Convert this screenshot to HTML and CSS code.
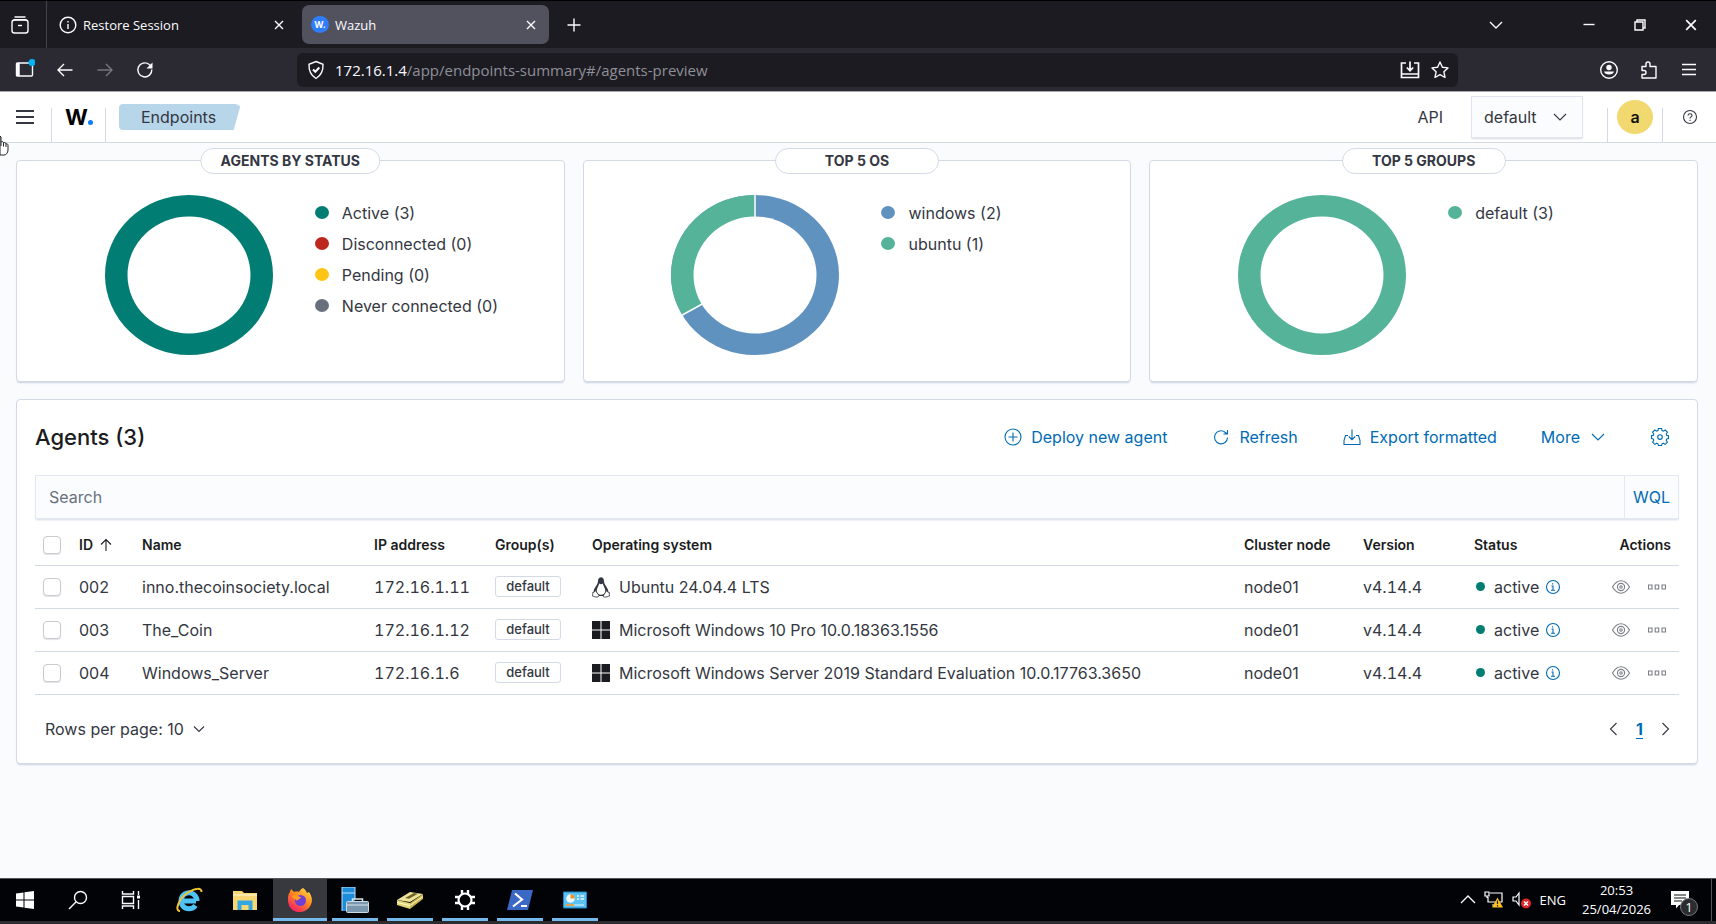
FILE: index.html
```
<!DOCTYPE html>
<html lang="en">
<head>
<meta charset="utf-8">
<title>Wazuh</title>
<link rel="stylesheet" href="styles.css">
</head>
<body>
<svg class="sprite" aria-hidden="true">
  <symbol id="i-x" viewBox="0 0 10 10"><path d="M1 1l8 8M9 1l-8 8"/></symbol>
  <symbol id="i-down" viewBox="0 0 16 16"><path d="M2 5l6 6 6-6"/></symbol>
  <symbol id="i-info" viewBox="0 0 16 16"><circle cx="8" cy="8" r="6.500"/><path d="M6.500 7H8v4M6 11.300h4M7.600 4.200v1.300"/></symbol>
  <symbol id="i-eye" viewBox="0 0 20 16"><path d="M1.500 8C6.500-.3 13.500-.3 18.500 8 13.500 16.300 6.500 16.300 1.500 8z"/><circle cx="10" cy="8" r="3.600"/><circle cx="10" cy="8" r="1.200"/></symbol>
  <symbol id="i-boxes" viewBox="0 0 18 6"><path d="M.5 1h3.500v4H.5zM7.200 1h3.500v4H7.200zM14 1h3.500v4H14z"/></symbol>
  <symbol id="i-win" viewBox="0 0 18 18"><path d="M0 0h8.500v8.500H0zM9.500 0H18v8.500H9.500zM0 9.500h8.500V18H0zM9.500 9.500H18V18H9.500z"/></symbol>
</svg>

<header class="browser">
  <div class="tabs">
    <button class="view-btn" aria-label="Firefox View"><svg class="line" width="20" height="20" viewBox="0 0 20 20"><path d="M4.500 2h11M3.500 4.800h13"/><rect x="2" y="5" width="16" height="13" rx="2.500"/><path d="M8 10.500h4"/></svg></button>
    <div class="tab">
      <svg class="line" width="18" height="18" viewBox="0 0 18 18"><circle cx="9" cy="9" r="7.800"/><path d="M9 8v5M9 5v1.500"/></svg>
      <span class="tab-title">Restore Session</span>
      <button aria-label="Close Restore Session"><svg class="line" width="10" height="10"><use href="#i-x"/></svg></button>
    </div>
    <div class="tab tab-active">
      <span class="favicon">W.</span>
      <span class="tab-title">Wazuh</span>
      <button aria-label="Close Wazuh"><svg class="line" width="10" height="10"><use href="#i-x"/></svg></button>
    </div>
    <button class="new-tab" aria-label="New tab"><svg class="line" width="14" height="14" viewBox="0 0 14 14"><path d="M7 .5v13M.5 7h13"/></svg></button>
    <div class="window-btns">
      <button class="list-tabs" aria-label="List all tabs"><svg class="line" width="16" height="16"><use href="#i-down"/></svg></button>
      <button aria-label="Minimize"><svg class="line" width="12" height="12" viewBox="0 0 12 12"><path d="M.5 5.500h11"/></svg></button>
      <button aria-label="Restore"><svg class="line" width="12" height="12" viewBox="0 0 12 12"><path d="M3 3V1h8v8H9M1 3h8v8H1z"/></svg></button>
      <button aria-label="Close window"><svg class="line" width="12" height="12"><use href="#i-x"/></svg></button>
    </div>
  </div>
  <div class="navbar">
    <div class="nav-btns">
      <button aria-label="Sidebar"><svg class="line" width="20" height="22" viewBox="0 0 20 22"><rect x="1.500" y="4" width="16" height="13" rx="1"/><path d="M3 4v13" stroke-width="3.500"/><circle cx="17" cy="3.500" r="3.500" fill="#00b3f4" stroke="none"/></svg></button>
      <button aria-label="Back"><svg class="line" width="16" height="16" viewBox="0 0 16 16"><path d="M15.500 8H1M7 2L1 8l6 6"/></svg></button>
      <button aria-label="Forward"><svg class="line dim" width="16" height="16" viewBox="0 0 16 16"><path d="M.5 8H15M9 2l6 6-6 6"/></svg></button>
      <button aria-label="Reload"><svg class="line" width="18" height="18" viewBox="0 0 18 18"><path d="M15.800 8.500A7 7 0 1 1 13 3.300l2.500 2.200"/><path d="M16.500 1.500v6h-6z" fill="#fbfbfe" stroke="none"/></svg></button>
    </div>
    <div class="urlbar">
      <svg class="line" width="18" height="20" viewBox="0 0 18 20"><path d="M9 1.500l7 2.800c.3 6-1.500 11-7 14.200C3.500 15.300 1.700 10.300 2 4.300z"/><path d="M6 9.500l2.300 2.300L12.300 7.500" stroke-width="2"/></svg>
      <p class="url"><span>172.16.1.4</span>/app/endpoints-summary#/agents-preview</p>
      <button aria-label="Install"><svg class="line" width="20" height="20" viewBox="0 0 20 20"><path d="M6 3H1.500v14.500h17V3H14M1.500 14h17M10 1.500V10M6.800 7.500L10 10.700l3.200-3.200" stroke-width="1.700"/></svg></button>
      <button aria-label="Bookmark"><svg class="line" width="20" height="20" viewBox="0 0 20 20"><path d="M10 2l2.400 5.200 5.600.7-4.100 3.900 1.100 5.700-5-2.800-5 2.800 1.100-5.700L2 7.900l5.600-.7z" stroke-linejoin="round"/></svg></button>
    </div>
    <div class="nav-btns nav-right">
      <button aria-label="Account"><svg class="line" width="20" height="20" viewBox="0 0 20 20"><circle cx="10" cy="10" r="8.300"/><circle cx="10" cy="7.500" r="2.700" fill="#fbfbfe" stroke="none"/><path d="M5 11.500h10c-.5 4-9.500 4-10 0z" fill="#fbfbfe" stroke="none"/></svg></button>
      <button aria-label="Extensions"><svg class="line" width="20" height="20" viewBox="0 0 20 20"><path d="M3 6.500h4V4a2 2 0 0 1 4 0v2.500h6V18H3v-3.500h2a2 2 0 0 0 0-4H3z" stroke-linejoin="round"/></svg></button>
      <button aria-label="Menu"><svg class="line" width="14" height="14" viewBox="0 0 14 14"><path d="M0 1.500h14M0 6.500h14M0 11.500h14"/></svg></button>
    </div>
  </div>
</header>

<nav class="topbar">
  <button class="menu-btn" aria-label="Toggle navigation"><svg width="18" height="14" viewBox="0 0 18 14"><path d="M0 1h18M0 7h18M0 13h18"/></svg></button>
  <a class="logo" href="#" aria-label="Wazuh home">W<i></i></a>
  <a class="crumb" href="#">Endpoints</a>
  <div class="top-right">
    <label class="api-label" for="api">API</label>
    <div class="select">
      <select id="api"><option>default</option></select>
      <svg class="stroke" width="16" height="16"><use href="#i-down"/></svg>
    </div>
    <button class="account"><span class="avatar">a</span></button>
    <button class="help" aria-label="Help"><svg class="stroke" width="16" height="16" viewBox="0 0 16 16"><circle cx="8" cy="8" r="6.500"/><path d="M6 6.500c0-2.400 4-2.400 4 0C10 8 8 7.800 8 9.500M8 10.700v1.400"/></svg></button>
  </div>
</nav>
<svg class="cursor" width="9" height="22" viewBox="0 0 9 22"><path d="M0 1l1 1v5c1-1 2.500-.5 2.500 1C4.500 7 6 7.500 6 9c1-.6 2 0 2 1.500V15c0 3-2 5-4 5H0z" fill="#fff" stroke="#222"/><path d="M1 7v4M3.500 8v3.500M6 9v3" stroke="#222"/></svg>

<main class="page">
  <section class="charts">
    <article class="card">
      <h2 class="pill">Agents by status</h2>
      <svg class="donut" viewBox="0 0 168 160"><ellipse cx="84" cy="80" rx="84" ry="80" fill="#017d73"/><ellipse cx="84" cy="80" rx="61.500" ry="58.500" fill="#fff"/></svg>
      <ul class="legend">
        <li><i class="c-active"></i>Active (3)</li>
        <li><i class="c-disc"></i>Disconnected (0)</li>
        <li><i class="c-pend"></i>Pending (0)</li>
        <li><i class="c-never"></i>Never connected (0)</li>
      </ul>
    </article>
    <article class="card">
      <h2 class="pill">Top 5 OS</h2>
      <svg class="donut" viewBox="0 0 168 160"><ellipse cx="84" cy="80" rx="84" ry="80" fill="#6092c0"/><path d="M84 80V0A84 80 0 0 0 11.300 120z" fill="#54b399"/><path d="M84 0v80L11.300 120" fill="none" stroke="#fff" stroke-width="1.500"/><ellipse cx="84" cy="80" rx="61.500" ry="58.500" fill="#fff"/></svg>
      <ul class="legend">
        <li><i class="c-blue"></i>windows (2)</li>
        <li><i class="c-green"></i>ubuntu (1)</li>
      </ul>
    </article>
    <article class="card">
      <h2 class="pill">Top 5 groups</h2>
      <svg class="donut" viewBox="0 0 168 160"><ellipse cx="84" cy="80" rx="84" ry="80" fill="#54b399"/><ellipse cx="84" cy="80" rx="61.500" ry="58.500" fill="#fff"/></svg>
      <ul class="legend">
        <li><i class="c-green"></i>default (3)</li>
      </ul>
    </article>
  </section>

  <section class="agents">
    <div class="agents-head">
      <h1>Agents (3)</h1>
      <div class="actions">
        <button><svg class="stroke" width="20" height="20" viewBox="0 0 20 20"><circle cx="10" cy="10" r="8"/><path d="M10 5.500v9M5.500 10h9"/></svg>Deploy new agent</button>
        <button><svg class="stroke" width="20" height="20" viewBox="0 0 20 20"><path d="M16.500 10.500a6.500 6.500 0 1 1-2.500-5.300l2 1.600M16.500 3v4h-4"/></svg>Refresh</button>
        <button><svg class="stroke" width="20" height="20" viewBox="0 0 20 20"><path d="M6 8.500H3.500l-1.500 5V17.500h16V13.500l-1.500-5H14M10 2.500v10M6.800 9.500L10 12.700l3.200-3.200"/></svg>Export formatted</button>
        <button class="more">More<svg class="stroke" width="16" height="16"><use href="#i-down"/></svg></button>
        <button aria-label="Settings"><svg class="stroke" width="20" height="20" viewBox="0 0 20 20"><path d="M8.400 1.500h3.200l.4 2.100 1.300.6 1.900-1.200 2.200 2.200-1.200 1.900.6 1.300 1.700.3v2.900l-1.700.4-.6 1.300 1.200 1.900-2.200 2.200-1.900-1.200-1.300.6-.4 1.700H8.400L8 16.800l-1.300-.6-1.900 1.200-2.200-2.200 1.200-1.900-.6-1.300-1.700-.4V8.700l1.700-.3.600-1.300-1.200-1.900L4.800 3l1.900 1.200L8 3.600z"/><circle cx="10" cy="10.100" r="2.300"/></svg></button>
      </div>
    </div>
    <div class="search">
      <input type="text" placeholder="Search" aria-label="Search agents">
      <button>WQL</button>
    </div>
    <table>
      <colgroup><col class="w-check"><col class="w-id"><col class="w-name"><col class="w-ip"><col class="w-group"><col><col class="w-node"><col class="w-ver"><col class="w-status"><col class="w-act"></colgroup>
      <thead>
        <tr><th><input type="checkbox" aria-label="Select all"></th><th><button class="sort">ID<svg class="stroke" width="16" height="16" viewBox="0 0 16 16"><path d="M8 14V3M3 7.500l5-5 5 5"/></svg></button></th><th>Name</th><th>IP address</th><th>Group(s)</th><th>Operating system</th><th>Cluster node</th><th>Version</th><th>Status</th><th class="right">Actions</th></tr>
      </thead>
      <tbody>
        <tr><td><input type="checkbox" aria-label="Select 002"></td><td>002</td><td>inno.thecoinsociety.local</td><td class="num">172.16.1.11</td><td><span class="badge">default</span></td>
          <td><div class="row"><svg width="18" height="22" viewBox="0 0 18 22"><path d="M6 5c0-5 6-5 6 0 0 4 4 6 4.500 11l-3 4h-9l-3-4C2 11 6 9 6 5z" fill="#343741"/><path d="M7.300 7.500c1 1 2.400 1 3.400 0 .8 3 2.800 5 2.600 8.500-.2 3.500-8.400 3.500-8.600 0C4.500 12.500 6.500 10.500 7.300 7.500z" fill="#fff"/><path d="M3.500 14.500l3.500 5c-1 3-4.500.8-6.300.7-.5-1.200.3-2.200 0-3.700 1.600 0 2-.8 2.800-2zM14.500 14.500c.8 1.200 1.200 2 2.800 2-.3 1.500.5 2.500 0 3.700-1.800.1-4.500 2-6.300 0z" fill="#fff" stroke="#343741" stroke-width=".9"/></svg>Ubuntu 24.04.4 LTS</div></td>
          <td>node01</td><td class="num">v4.14.4</td><td><div class="row status"><i></i>active<svg class="stroke" width="16" height="16"><use href="#i-info"/></svg></div></td>
          <td><div class="row acts"><button aria-label="View agent 002"><svg class="stroke" width="20" height="16"><use href="#i-eye"/></svg></button><button aria-label="More actions 002"><svg class="stroke" width="18" height="6"><use href="#i-boxes"/></svg></button></div></td></tr>
        <tr><td><input type="checkbox" aria-label="Select 003"></td><td>003</td><td>The_Coin</td><td class="num">172.16.1.12</td><td><span class="badge">default</span></td>
          <td><div class="row"><svg class="win" width="18" height="18"><use href="#i-win"/></svg>Microsoft Windows 10 Pro 10.0.18363.1556</div></td>
          <td>node01</td><td class="num">v4.14.4</td><td><div class="row status"><i></i>active<svg class="stroke" width="16" height="16"><use href="#i-info"/></svg></div></td>
          <td><div class="row acts"><button aria-label="View agent 003"><svg class="stroke" width="20" height="16"><use href="#i-eye"/></svg></button><button aria-label="More actions 003"><svg class="stroke" width="18" height="6"><use href="#i-boxes"/></svg></button></div></td></tr>
        <tr><td><input type="checkbox" aria-label="Select 004"></td><td>004</td><td>Windows_Server</td><td class="num">172.16.1.6</td><td><span class="badge">default</span></td>
          <td><div class="row"><svg class="win" width="18" height="18"><use href="#i-win"/></svg>Microsoft Windows Server 2019 Standard Evaluation 10.0.17763.3650</div></td>
          <td>node01</td><td class="num">v4.14.4</td><td><div class="row status"><i></i>active<svg class="stroke" width="16" height="16"><use href="#i-info"/></svg></div></td>
          <td><div class="row acts"><button aria-label="View agent 004"><svg class="stroke" width="20" height="16"><use href="#i-eye"/></svg></button><button aria-label="More actions 004"><svg class="stroke" width="18" height="6"><use href="#i-boxes"/></svg></button></div></td></tr>
      </tbody>
    </table>
    <div class="pager">
      <button class="rows">Rows per page: 10<svg class="stroke" width="12" height="12" viewBox="0 0 12 12"><path d="M1 3.500l5 5 5-5"/></svg></button>
      <div class="pages">
        <button aria-label="Previous page"><svg class="stroke" width="16" height="16" viewBox="0 0 16 16"><path d="M11.500 2l-6 6 6 6"/></svg></button>
        <a href="#">1</a>
        <button aria-label="Next page"><svg class="stroke" width="16" height="16" viewBox="0 0 16 16"><path d="M4.500 2l6 6-6 6"/></svg></button>
      </div>
    </div>
  </section>
</main>

<footer class="taskbar">
  <div class="apps">
    <button class="app sys" aria-label="Start"><svg width="18" height="18" viewBox="0 0 18 18"><path d="M0 2.500l7.500-1v7H0zM8.500 1.300L18 0v8.500H8.500zM0 9.500h7.500v7l-7.500-1zM8.500 9.500H18V18l-9.500-1.300z" fill="#fff"/></svg></button>
    <button class="app sys" aria-label="Search"><svg class="line" width="20" height="20" viewBox="0 0 20 20"><circle cx="12.500" cy="7.500" r="6"/><path d="M8.200 11.800L1 19"/></svg></button>
    <button class="app sys" aria-label="Task view"><svg class="line" width="20" height="18" viewBox="0 0 20 18"><path d="M1.500 0v3h11V0M1.500 18v-3h11v3M1.500 5.500h11v7h-11zM17.500 0v4M17.500 9v9"/><path d="M16 4.500h3v3h-3z" fill="#fff" stroke="none"/></svg></button>
    <button class="app ie" aria-label="Internet Explorer"><svg width="28" height="26" viewBox="0 0 28 26"><path d="M5.500 14H20M19.500 18.500A8 8 0 1 1 21 14" fill="none" stroke="#4ec3f5" stroke-width="5"/><path d="M4 24c-6 0-1-13 8-18.500C19 1 26 .5 25.500 5" fill="none" stroke="#f3c433" stroke-width="2"/></svg></button>
    <button class="app" aria-label="File Explorer"><svg width="26" height="22" viewBox="0 0 26 22"><path d="M1 2h9l2 2h13v17H1z" fill="#f7d774"/><path d="M1 5h24v2H1z" fill="#fbe9a8"/><path d="M5.500 21v-9.500h15V21h-4v-5h-7v5z" fill="#35a7e0"/></svg></button>
    <button class="app open current" aria-label="Firefox"><svg width="26" height="26" viewBox="0 0 26 26"><defs><linearGradient id="fx" x1=".9" y1="0" x2=".2" y2="1"><stop offset="0" stop-color="#ffe14a"/><stop offset=".45" stop-color="#ff8a1f"/><stop offset="1" stop-color="#f5156c"/></linearGradient></defs><path d="M16 1c2 1 3 3 4 5l2-1c3 4 4 9 1.500 13.500-5 9-18 8.500-21.500 0C0 13 1 7 3 5l1-3 3 3c2-.6 4-.4 5 0 1-2 2-3 4-4z" fill="url(#fx)"/><circle cx="13.500" cy="13.500" r="5.500" fill="#6e3fd6"/><path d="M5 9c4-2 6 1 9 1 0 2-3 2-4 4-1-2-4-2-5-5z" fill="#ff9a24"/></svg></button>
    <button class="app open" aria-label="Server Manager"><svg width="28" height="26" viewBox="0 0 28 26"><path d="M1 0h13v24H1z" fill="#1d8cdb"/><path d="M1 6h13M1 0h13v12M1 0v24" fill="none" stroke="#bfe2fa"/><path d="M11.500 15V12h10v3" fill="none" stroke="#dce6ee" stroke-width="1.500"/><rect x="5.500" y="14.500" width="22" height="11" rx="1" fill="#7b97ad" stroke="#cfdbe4"/><path d="M6 18h21" stroke="#dbe5ec"/></svg></button>
    <button class="app open" aria-label="Disk tool"><svg width="28" height="18" viewBox="0 0 28 18"><path d="M1 9L14 1l13 2-13 8z" fill="#efe59a"/><path d="M1 9l13 3v6L1 14z" fill="#e2d67c"/><path d="M14 12l13-9v5l-13 10z" fill="#c9b650"/><path d="M9 7l9-5 4 .7-9 5z" fill="#6d6427"/><path d="M1 11.500l13 3 13-9" fill="none" stroke="#fff8c4"/></svg></button>
    <button class="app open" aria-label="Settings"><svg width="22" height="22" viewBox="0 0 22 22"><circle cx="11" cy="11" r="6.500" fill="none" stroke="#fff" stroke-width="2.200"/><path d="M8 1v4M14 1v4M8 17v4M14 17v4M1 8h4M1 14h4M17 8h4M17 14h4" stroke="#fff" stroke-width="2.400"/></svg></button>
    <button class="app open" aria-label="PowerShell"><svg width="28" height="20" viewBox="0 0 28 20"><path d="M6 0h21l-5 20H1z" fill="#3a68c4"/><path d="M9 3.500l7 6-9 7M15 16h6" fill="none" stroke="#fff" stroke-width="2.200"/></svg></button>
    <button class="app open" aria-label="System monitor"><svg width="24" height="18" viewBox="0 0 24 18"><path d="M.5 1h23v16H.5z" fill="#5bc0f2" stroke="#1b86c7"/><circle cx="7.500" cy="7.500" r="4.300" fill="#e9f7ff"/><path d="M7.500 7.500V3.200a4.300 4.300 0 0 1 4.300 4.300z" fill="#f2921d"/><path d="M14 5h2M17.500 5H21M14 8h2M17.500 8H21" stroke="#e9f7ff" stroke-width="1.500"/><path d="M3 14h18" stroke="#e9f7ff"/><path d="M3 14h8" stroke="#f2921d" stroke-width="1.500"/></svg></button>
  </div>
  <div class="tray">
    <svg class="line" width="16" height="16" viewBox="0 0 16 16"><path d="M1 11l7-7 7 7"/></svg>
    <svg width="20" height="18" viewBox="0 0 20 18"><path d="M6 2h12v9H4V6M8 14h5M1 1h4v4H1zM3 5v2" fill="none" stroke="#fff" stroke-width="1.200"/><path d="M13.500 6.500l5.500 10H8z" fill="#fcc21b"/><path d="M13.500 9.500v3.500M13.500 14v1.500" stroke="#222" stroke-width="1.200"/></svg>
    <svg width="20" height="18" viewBox="0 0 20 18"><path d="M1 6h3l3-4v12l-3-4H1z" fill="none" stroke="#fff" stroke-width="1.200"/><circle cx="14" cy="12.500" r="5" fill="#e0242b"/><path d="M12 10.500l4 4M16 10.500l-4 4" stroke="#fff" stroke-width="1.500"/></svg>
    <span>ENG</span>
    <time>20:53<br>25/04/2026</time>
    <button class="notes" aria-label="Notifications"><svg width="20" height="18" viewBox="0 0 20 18"><path d="M0 0h18v14H8l-3 3.500V14H0z" fill="#fff"/><path d="M3 4h12M3 7h12M3 10h8" stroke="#111" stroke-width="1.200"/></svg><span>1</span></button>
  </div>
</footer>
</body>
</html>
```

FILE: styles.css
```
* { box-sizing: border-box; }
body {
  margin: 0;
  min-height: 100vh;
  display: flex;
  flex-direction: column;
  background: #fafbfd;
  color: #343741;
  font: 16px/24px Inter, "Noto Sans", sans-serif;
}
h1, h2, p, ul { margin: 0; padding: 0; }
ul { list-style: none; }
button {
  border: 0;
  padding: 0;
  background: none;
  color: inherit;
  font: inherit;
  display: flex;
  align-items: center;
  justify-content: center;
}
a { color: inherit; text-decoration: none; }
svg { display: block; flex: none; }
.sprite { position: absolute; width: 0; height: 0; }
.line { fill: none; stroke: #fbfbfe; stroke-width: 1.4; }
.dim { stroke: #77767e; }
.stroke { fill: none; stroke: currentColor; stroke-width: 1.1; }

/* Browser chrome */
.browser {
  font: 13px/20px "Open Sans", "Noto Sans", sans-serif;
  color: #fbfbfe;
  background: #2b2a33;
  border-top: 1px solid #000;
  border-bottom: 1px solid #a9a9ae;
}
.tabs { display: flex; align-items: center; height: 47px; background: #1c1b22; }
.view-btn { width: 47px; padding-right: 6px; height: 100%; border-right: 1px solid #45444c; }
.tab {
  display: flex;
  align-items: center;
  gap: 6px;
  width: 247px;
  height: 39px;
  padding: 0 10px 0 12px;
  border-radius: 7px;
}
.tab-title { flex: 1; }
.tab-active { background: #52525e; margin-left: 8px; padding: 0 13px 0 9px; }
.favicon {
  width: 18px;
  height: 17px;
  border-radius: 50%;
  background: #2f7dfa;
  font: 700 9px/17px Inter, sans-serif;
  text-align: center;
}
.new-tab { width: 50px; }
.window-btns { display: flex; margin-left: auto; }
.window-btns button { width: 51px; }
.window-btns .list-tabs { margin-right: 42px; }
.navbar { display: flex; align-items: center; height: 43px; }
.nav-btns { display: flex; width: 297px; padding-left: 5px; }
.nav-btns button { width: 40px; }
.urlbar {
  flex: 1;
  display: flex;
  align-items: center;
  gap: 10px;
  height: 34px;
  padding: 0 8px 0 10px;
  border-radius: 6px;
  background: #1c1b22;
}
.url { flex: 1; color: #8f8f98; font-size: 15px; }
.url span { color: #fbfbfe; }
.nav-right { width: 258px; justify-content: flex-end; padding: 0 7px 0 0; }

/* Application bar */
.topbar {
  display: flex;
  align-items: center;
  height: 51px;
  background: #fff;
  border-bottom: 1px solid #d3dae6;
}
.menu-btn { width: 51px; height: 50px; padding-right: 2px; }
.menu-btn path { stroke: #343741; stroke-width: 2; }
.logo {
  display: flex;
  align-items: baseline;
  align-self: flex-end;
  width: 55px;
  height: 34px;
  padding: 0 0 0 13px;
  border: solid #d3dae6;
  border-width: 0 1px;
  color: #000;
  font: 700 22px/18px Inter, sans-serif;
}
.logo i { width: 5px; height: 5px; border-radius: 50%; background: #0b7bff; }
.crumb {
  width: 122px;
  height: 26px;
  margin-left: 13px;
  padding-left: 22px;
  line-height: 26px;
  background: #b8d6ea;
  border-radius: 4px 6px 6px 4px;
  clip-path: polygon(0 0, 100% 0, 94% 100%, 0 100%);
}
.top-right { display: flex; align-items: center; height: 100%; margin-left: auto; }
.select {
  display: grid;
  align-items: center;
  width: 112px;
  height: 42px;
  margin: 0 24px 0 28px;
  border: 1px solid #dfe4ee;
  background: #fbfcfe;
  box-shadow: 0 2px 2px -1px #d3dae6;
}
.select > * { grid-area: 1 / 1; }
.select select {
  appearance: none;
  width: 100%;
  height: 100%;
  padding: 0 12px;
  border: 0;
  background: none;
  color: inherit;
  font: inherit;
}
.select svg { justify-self: end; margin-right: 14px; pointer-events: none; }
.account {
  align-self: flex-end;
  align-items: flex-start;
  width: 56px;
  height: 34px;
  border: solid #d3dae6;
  border-width: 0 1px;
}
.avatar {
  width: 36px;
  height: 34px;
  margin-top: -8px;
  border-radius: 50%;
  background: #f1d86f;
  color: #111;
  font-weight: 600;
  line-height: 34px;
}
.help { width: 53px; }
.cursor { position: absolute; left: 0; top: 135px; }

/* Summary charts */
.page { flex: 1; padding: 17px 18px 20px 16px; }
.charts { display: grid; grid-template-columns: repeat(3, 1fr); gap: 18px; }
.card, .agents {
  background: #fff;
  border: 1px solid #d3dae6;
  border-radius: 4px;
  box-shadow: 0 2px 2px -1px #c9d1df;
}
.card {
  position: relative;
  display: flex;
  justify-content: center;
  gap: 42px;
  height: 222px;
  padding: 34px 0 0 3px;
}
.pill {
  position: absolute;
  top: -13px;
  left: 50%;
  transform: translateX(-50%);
  min-width: 164px;
  height: 26px;
  padding: 0 19px;
  border: 1px solid #d3dae6;
  border-radius: 13px;
  background: #fff;
  font-size: 14px;
  line-height: 24px;
  font-weight: 700;
  text-align: center;
  text-transform: uppercase;
  white-space: nowrap;
}
.donut { width: 168px; height: 160px; }
.legend { width: 164px; padding-top: 2px; }
.legend li { display: flex; align-items: center; gap: 13px; height: 31px; white-space: nowrap; }
.legend i { flex: none; width: 14px; height: 13px; border-radius: 50%; }
.c-active { background: #017d73; }
.c-disc { background: #bd271e; }
.c-pend { background: #fec514; }
.c-never { background: #69707d; }
.c-blue { background: #6092c0; }
.c-green { background: #54b399; }

/* Agents table */
.agents { margin-top: 17px; padding: 16px 18px 9px; }
.agents-head { display: flex; align-items: center; justify-content: space-between; height: 42px; }
h1 { font-size: 22px; line-height: 32px; font-weight: 500; color: #1a1c21; }
.actions { display: flex; color: #006bb4; padding-right: 9px; }
.actions button { gap: 8px; margin-left: 44px; }
.actions .more { gap: 10px; }
.search {
  display: flex;
  height: 44px;
  margin-top: 17px;
  border: 1px solid #e3e8f1;
  background: #fbfcfd;
  box-shadow: 0 2px 2px -1px #d3dae6;
}
.search input {
  flex: 1;
  padding: 0 13px;
  border: 0;
  background: none;
  font: inherit;
}
.search input::placeholder { color: #69707d; opacity: 1; }
.search button { width: 54px; border-left: 1px solid #e3e8f1; color: #006bb4; }
table { width: 100%; table-layout: fixed; border-collapse: collapse; }
.w-check { width: 36px; }
.w-id { width: 63px; }
.w-name { width: 232px; }
.w-ip { width: 121px; }
.w-group { width: 97px; }
.w-node { width: 119px; }
.w-ver { width: 111px; }
.w-status { width: 110px; }
.w-act { width: 103px; }
th, td {
  padding: 0 8px;
  border-bottom: 1px solid #d3dae6;
  text-align: left;
  white-space: nowrap;
}
th { height: 46px; padding-top: 6px; color: #1a1c21; font-size: 14px; font-weight: 600; }
td { height: 43px; }
.num { font-variant-numeric: tabular-nums; }
.right { text-align: right; }
.sort { gap: 5px; }
input[type="checkbox"] {
  appearance: none;
  display: block;
  width: 18px;
  height: 18px;
  margin: 0;
  border: 1px solid #c9cbcd;
  border-radius: 4px;
  background: #fff;
  box-shadow: 0 1px 1px #e0e3e8;
}
.badge {
  display: block;
  width: 66px;
  height: 21px;
  border: 1px solid #d3dae6;
  border-radius: 3px;
  font-size: 13px;
  line-height: 19px;
  font-weight: 500;
  text-align: center;
}
.row { display: flex; align-items: center; gap: 9px; }
.win { fill: #1a1c21; }
.status { gap: 6px; }
.status i { width: 9px; height: 9px; margin: 0 3px 0 2px; border-radius: 50%; background: #017d73; }
.status svg { color: #006bb4; }
.acts { justify-content: flex-end; gap: 17px; padding-right: 5px; color: #7b7e85; }
.pager { display: flex; align-items: center; justify-content: space-between; height: 50px; margin-top: 9px; padding: 0 5px 0 10px; }
.rows { gap: 9px; }
.pages { display: flex; align-items: center; gap: 15px; }
.pages a { color: #006bb4; font-weight: 700; text-decoration: underline; text-underline-offset: 3px; }

/* Desktop taskbar */
.taskbar {
  display: flex;
  justify-content: space-between;
  height: 46px;
  border-top: 1px solid #55565a;
  border-bottom: 3px solid #2c2c2e;
  background: #010307;
  color: #fff;
  font: 13px/19px "Open Sans", "Noto Sans", sans-serif;
}
.apps { display: flex; gap: 9px; padding-left: 3px; }
.app { width: 46px; }
.app.sys { width: 44px; }
.app.ie { margin-left: 5px; }
.app.open { border-bottom: 3px solid #76b9ed; padding-top: 2px; }
.app.current { width: 54px; margin: 0 -4px; background: #38393e; }
.tray { display: flex; align-items: center; gap: 8px; margin-right: 4px; padding-right: 12px; border-right: 1px solid #55565a; }
.tray time { margin: 0 12px 0 8px; text-align: center; }
.notes { position: relative; width: 28px; justify-content: flex-start; }
.notes span {
  position: absolute;
  left: 9px;
  top: 7px;
  width: 18px;
  height: 18px;
  border: 1px solid #77787c;
  border-radius: 50%;
  background: #2b2c30;
  line-height: 16px;
  text-align: center;
}
```
